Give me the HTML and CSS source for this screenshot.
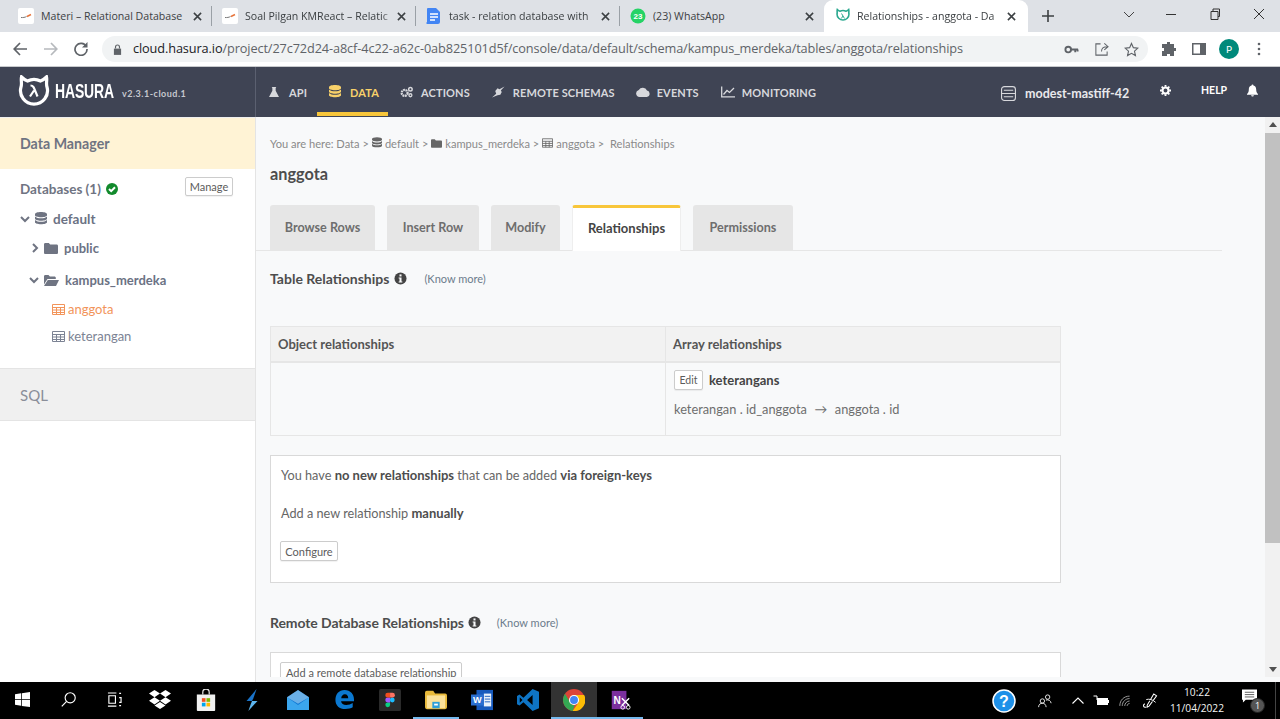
FILE: index.html
```html
<!DOCTYPE html>
<html lang="en">
<head>
<meta charset="utf-8">
<title>Relationships - anggota - Data | Hasura</title>
<link rel="stylesheet" href="styles.css">
</head>
<body>
<svg class="defs" width="0" height="0">
  <defs>
    <symbol id="db" viewBox="0 0 12 14"><path fill="currentColor" d="M6 0C2.700 0 0 .9 0 2.100v1.100C0 4.300 2.700 5.200 6 5.200s6-.9 6-2V2.100C12 .9 9.300 0 6 0zM0 4.500v2.200c0 1.100 2.700 2 6 2s6-.9 6-2V4.500C10.700 5.800 8.300 6.300 6 6.300S1.300 5.800 0 4.500zM0 8v2.200C0 11.300 2.700 12.200 6 12.200s6-.9 6-2V8c-1.300 1.300-3.700 1.800-6 1.800S1.300 9.300 0 8z"/></symbol>
    <symbol id="folder" viewBox="0 0 14 11"><path fill="currentColor" d="M1.300 0h3.500l1.400 1.600h6.500c.7 0 1.300.6 1.300 1.300v6.800c0 .7-.6 1.300-1.300 1.300H1.300C.6 11 0 10.400 0 9.700V1.300C0 .6.600 0 1.300 0z"/></symbol>
    <symbol id="table" viewBox="0 0 13 11"><path fill="none" stroke="currentColor" d="M.5.5h12v10H.5zM.5 3.500h12M.5 6h12M.5 8.500h12M4.500 3.500v7M8.500 3.500v7"/></symbol>
    <symbol id="info" viewBox="0 0 14 14"><circle cx="7" cy="7" r="6.500" fill="currentColor"/><rect x="5.900" y="2.600" width="2.200" height="2.200" fill="#f8f9fa"/><path fill="#f8f9fa" d="M5 6h3.100v4.200H9v1.100H5v-1.100h.9V7.100H5z"/></symbol>
    <symbol id="close" viewBox="0 0 10 10"><path stroke="currentColor" stroke-width="1.700" d="M1 1l8 8M9 1l-8 8"/></symbol>
    <symbol id="dash" viewBox="0 0 16 16"><rect width="16" height="16" rx="2" fill="#fff"/><path d="M3 9.500c2 .2 4-.1 5.500-1" stroke="#777" fill="none"/><path d="M9 8.500l4-2" stroke="#e8743b" stroke-width="1.500"/></symbol>
    <symbol id="chev-d" viewBox="0 0 10 7"><path fill="none" stroke="currentColor" stroke-width="2" d="M1 1l4 4 4-4"/></symbol>
    <symbol id="chev-r" viewBox="0 0 7 10"><path fill="none" stroke="currentColor" stroke-width="2" d="M1 1l4 4-4 4"/></symbol>
  </defs>
</svg>

<div class="screen">
  <div class="tabstrip">
    <div class="tab">
      <svg class="fav"><use href="#dash"/></svg>
      <span class="tab-title">Materi – Relational Database</span>
      <svg class="tab-x"><use href="#close"/></svg>
    </div>
    <i class="tab-sep"></i>
    <div class="tab">
      <svg class="fav"><use href="#dash"/></svg>
      <span class="tab-title tab-fade">Soal Pilgan KMReact – Relatic</span>
      <svg class="tab-x"><use href="#close"/></svg>
    </div>
    <i class="tab-sep"></i>
    <div class="tab">
      <svg class="fav" viewBox="0 0 16 16"><path fill="#4285f4" d="M2 0h8l4 4v10a2 2 0 0 1-2 2H2a1 1 0 0 1-1-2V1a1 1 0 0 1 1-1z"/><path stroke="#fff" stroke-width="1.500" d="M4 6h8M4 9h8M4 12h5"/></svg>
      <span class="tab-title tab-fade">task - relation database with</span>
      <svg class="tab-x"><use href="#close"/></svg>
    </div>
    <i class="tab-sep"></i>
    <div class="tab">
      <svg class="fav" viewBox="0 0 16 16"><circle cx="8" cy="8" r="7.500" fill="#25d366"/><text x="8" y="11" font-size="8" font-weight="700" text-anchor="middle" fill="#fff" font-family="Liberation Sans">23</text></svg>
      <span class="tab-title">(23) WhatsApp</span>
      <svg class="tab-x"><use href="#close"/></svg>
    </div>
    <div class="tab tab-active">
      <svg class="fav" viewBox="0 0 16 16"><path fill="none" stroke="#2aa88f" stroke-width="1.600" d="M2.300 1.500c-.5 2 .2 3-.3 4.500a6 6 0 1 0 12 0c-.5-1.500.2-2.500-.3-4.500-1 1-2 1.500-2.700 1.700a7 7 0 0 0-6 0C4.300 3 3.300 2.500 2.300 1.500z"/><path d="M6.500 5.500l3 5M8 8l-1.700 2.500" stroke="#2aa88f" fill="none"/></svg>
      <span class="tab-title tab-fade">Relationships - anggota - Da</span>
      <svg class="tab-x"><use href="#close"/></svg>
    </div>
    <svg class="newtab" viewBox="0 0 12 12"><path stroke="#3c4043" stroke-width="1.600" d="M6 0v12M0 6h12"/></svg>
    <div class="winctl">
      <svg viewBox="0 0 12 12"><path fill="none" stroke="#444" d="M1 4l5 5 5-5"/></svg>
      <svg viewBox="0 0 12 12"><path stroke="#333" d="M1 6.500h10"/></svg>
      <svg viewBox="0 0 12 12"><path fill="none" stroke="#333" d="M2 3.500h7v8H2zM4 3.500V1h6.500v7.500H9"/></svg>
      <svg viewBox="0 0 12 12"><path stroke="#333" d="M1 1l10 10M11 1L1 11"/></svg>
    </div>
  </div>

  <div class="toolbar">
    <svg class="tb-ic" viewBox="0 0 14 14"><path fill="none" stroke="#5f6368" stroke-width="1.700" d="M14 7H1.500M7 1L1.200 7 7 13"/></svg>
    <svg class="tb-ic" viewBox="0 0 14 14"><path fill="none" stroke="#b6b9bd" stroke-width="1.700" d="M0 7h12.500M7 1l5.800 6L7 13"/></svg>
    <svg class="tb-ic" viewBox="0 0 14 14"><path fill="none" stroke="#5f6368" stroke-width="1.700" d="M12.300 4.500A6 6 0 1 0 13 7"/><path fill="#5f6368" d="M13.500 0v5.500H8z"/></svg>
    <div class="omnibox">
      <svg class="lock" viewBox="0 0 10 12"><path fill="#5f6368" d="M1 5h8v7H1z"/><path fill="none" stroke="#5f6368" stroke-width="1.300" d="M2.800 5V3.200a2.200 2.200 0 0 1 4.400 0V5"/></svg>
      <span class="url"><b>cloud.hasura.io</b>/project/27c72d24-a8cf-4c22-a62c-0ab825101d5f/console/data/default/schema/kampus_merdeka/tables/anggota/relationships</span>
      <svg class="omni-ic" viewBox="0 0 16 16"><circle cx="4.500" cy="8" r="3" fill="none" stroke="#5f6368" stroke-width="2"/><path stroke="#5f6368" stroke-width="2" d="M7 8h8M12 8v3M14.500 8v2"/></svg>
      <svg class="omni-ic" viewBox="0 0 16 16"><path fill="none" stroke="#5f6368" stroke-width="1.100" d="M7 2H2v12h12v-4M8 10c0-3 2-5 6-5M11 1.500L15 5l-4 3.500"/></svg>
      <svg class="omni-ic" viewBox="0 0 16 16"><path fill="none" stroke="#5f6368" stroke-width="1.200" d="M8 1.500l2 4.500 4.800.5-3.600 3.200 1 4.800L8 12.100l-4.200 2.400 1-4.800L1.200 6.500 6 6z"/></svg>
    </div>
    <div class="tb-right">
      <svg class="ext" viewBox="0 0 14 14"><path fill="#5f6368" d="M5 0h3v2h4v4h2v3h-2v5H8v-2H5v2H0V9h2V6H0V2h5z"/></svg>
      <svg class="ext" viewBox="0 0 14 14"><path fill="#5f6368" d="M0 1h14v12H0zM1.500 2.500v9H8v-9z" fill-rule="evenodd"/></svg>
      <span class="avatar">P</span>
      <svg class="dots" viewBox="0 0 4 14"><circle cx="2" cy="2" r="1.300" fill="#5f6368"/><circle cx="2" cy="7" r="1.300" fill="#5f6368"/><circle cx="2" cy="12" r="1.300" fill="#5f6368"/></svg>
    </div>
  </div>

  <header class="hasura-nav">
    <div class="brand">
      <svg class="logo" viewBox="0 0 32 32"><path fill="none" stroke="#fff" stroke-width="3.200" d="M3.500 2c-.8 4 .7 6-.5 10a13.500 13.500 0 1 0 26 0c-1.200-4 .3-6-.5-10-2 2-4.500 3.500-6 4a14 14 0 0 0-13 0c-1.500-.5-4-2-6-4z"/><path fill="none" stroke="#fff" stroke-width="2.200" d="M12.500 10.500c3 0 3 1 7 11M16 15.500l-4 6"/></svg>
      <span class="brand-name">HASURA</span>
      <span class="brand-ver">v2.3.1-cloud.1</span>
    </div>
    <nav class="nav-items">
      <a class="nav-item nav-api"><svg viewBox="0 0 12 12"><path fill="#d7d8dc" d="M3.500 0h5v1H8v3.500L12 12H0l4-7.500V1h-.5z"/></svg>API</a>
      <a class="nav-item nav-data nav-active"><svg viewBox="0 0 12 14"><use href="#db"/></svg>DATA</a>
      <a class="nav-item nav-actions"><svg viewBox="0 0 14 12"><circle cx="5" cy="7" r="3.200" fill="none" stroke="#d7d8dc" stroke-width="2.400" stroke-dasharray="2 .6"/><circle cx="11.200" cy="3" r="1.900" fill="none" stroke="#d7d8dc" stroke-width="1.600"/><circle cx="11.200" cy="9.500" r="1.600" fill="none" stroke="#d7d8dc" stroke-width="1.400"/></svg>ACTIONS</a>
      <a class="nav-item nav-remote"><svg viewBox="0 0 14 12"><path fill="#d7d8dc" d="M13.500 0L8 3 6 2 3.500 5l1 3L0 12l6-2.500 3-.5 1.500-3-1-1.500z"/></svg>REMOTE SCHEMAS</a>
      <a class="nav-item nav-events"><svg viewBox="0 0 14 10"><path fill="#d7d8dc" d="M3.500 10a3.500 3.500 0 0 1-.7-6.900A4.500 4.500 0 0 1 11 3.500 3.300 3.300 0 0 1 10.800 10z"/></svg>EVENTS</a>
      <a class="nav-item nav-mon"><svg viewBox="0 0 14 11"><path fill="none" stroke="#d7d8dc" stroke-width="1.300" d="M.7 0v10.300H14M2.500 8l3.500-4 2.500 2L13 1.500"/></svg>MONITORING</a>
    </nav>
    <div class="nav-right">
      <svg class="srv" viewBox="0 0 16 16"><rect x=".6" y=".6" width="14.800" height="14.800" rx="3" fill="none" stroke="#d7d8dc" stroke-width="1.200"/><path stroke="#d7d8dc" stroke-width="1.200" d="M.6 8h14.800M3 4.500h10M3 11.500h10"/></svg>
      <span class="project">modest-mastiff-42</span>
      <svg class="gear" viewBox="0 0 12 12"><circle cx="6" cy="6" r="3.300" fill="none" stroke="#fff" stroke-width="2.300"/><path stroke="#fff" stroke-width="2" d="M6 0v2M6 10v2M0 6h2M10 6h2M1.800 1.800l1.400 1.400M8.800 8.800l1.400 1.400M1.800 10.200l1.400-1.400M8.800 3.200l1.400-1.400"/></svg>
      <span class="help">HELP</span>
      <svg class="bell" viewBox="0 0 12 13"><path fill="#fff" d="M6 0a1 1 0 0 1 1 1.100C9 1.600 10 3.200 10 5c0 3 .8 4 2 5.200V11H0v-.8C1.200 9 2 8 2 5c0-1.800 1-3.400 3-3.900A1 1 0 0 1 6 0zM4.500 11.600h3a1.500 1.500 0 0 1-3 0z"/></svg>
    </div>
  </header>

  <div class="app">
    <aside class="sidebar">
      <div class="side-head">Data Manager</div>
      <div class="side-body">
        <div class="db-row">
          <span class="db-title">Databases (1)</span>
          <svg class="ok" viewBox="0 0 12 12"><circle cx="6" cy="6" r="6" fill="#128a2c"/><path fill="none" stroke="#fff" stroke-width="2" d="M3 6l2.200 2.200L9 4.300"/></svg>
          <button class="btn btn-manage">Manage</button>
        </div>
        <div class="tree-db"><svg class="cv"><use href="#chev-d"/></svg><svg class="ic-db"><use href="#db"/></svg>default</div>
        <div class="tree-schema"><svg class="cvr"><use href="#chev-r"/></svg><svg class="ic-folder"><use href="#folder"/></svg>public</div>
        <div class="tree-schema tree-open"><svg class="cv"><use href="#chev-d"/></svg><svg class="ic-folder" viewBox="0 0 15 11"><path fill="currentColor" d="M0 9.500V1.300C0 .6.600 0 1.300 0h3.200l1.400 1.500h4.600c.7 0 1.300.6 1.300 1.300V4H3.500zM3.800 5H15l-3 6H0z"/></svg>kampus_merdeka</div>
        <div class="tree-table is-current"><svg class="ic-table"><use href="#table"/></svg>anggota</div>
        <div class="tree-table"><svg class="ic-table"><use href="#table"/></svg>keterangan</div>
      </div>
      <div class="side-sql">SQL</div>
    </aside>

    <main class="content">
      <div class="crumbs">You are here: Data &gt;<svg class="cr-db"><use href="#db"/></svg>default &gt;<svg class="cr-f"><use href="#folder"/></svg>kampus_merdeka &gt;<svg class="cr-t"><use href="#table"/></svg>anggota &gt; &nbsp;Relationships</div>
      <h1 class="title">anggota</h1>
      <div class="tabs">
        <a class="ctab ctab-1">Browse Rows</a>
        <a class="ctab ctab-2">Insert Row</a>
        <a class="ctab ctab-3">Modify</a>
        <a class="ctab ctab-4 ctab-active">Relationships</a>
        <a class="ctab ctab-5">Permissions</a>
      </div>
      <h2 class="section-h sec-table">Table Relationships <svg class="info"><use href="#info"/></svg><a class="know">(Know more)</a></h2>
      <table class="rel-table">
        <thead>
          <tr><th class="col-obj">Object relationships</th><th>Array relationships</th></tr>
        </thead>
        <tbody>
          <tr>
            <td></td>
            <td>
              <div class="rel-name"><button class="btn btn-edit">Edit</button><b>keterangans</b></div>
              <div class="rel-map">keterangan . id_anggota<span class="rel-arrow">→</span>anggota . id</div>
            </td>
          </tr>
        </tbody>
      </table>
      <section class="box box-add">
        <p class="p-1">You have <b>no new relationships</b> that can be added <b>via foreign-keys</b></p>
        <p class="p-2">Add a new relationship <b>manually</b></p>
        <button class="btn btn-conf">Configure</button>
      </section>
      <h2 class="section-h sec-remote">Remote Database Relationships <svg class="info"><use href="#info"/></svg><a class="know">(Know more)</a></h2>
      <section class="box box-remote">
        <button class="btn btn-conf">Add a remote database relationship</button>
      </section>
    </main>

    <div class="scrollbar">
      <svg viewBox="0 0 8 5" class="arrow"><path fill="#505050" d="M4 0l4 5H0z"/></svg>
      <div class="thumb"></div>
      <svg viewBox="0 0 8 5" class="arrow arrow-d"><path fill="#505050" d="M4 5l4-5H0z"/></svg>
    </div>
  </div>

  <footer class="taskbar">
    <div class="task-left">
      <span class="ti ti-sm"><svg viewBox="0 0 16 16"><path fill="#fff" d="M0 2.300l6.500-.9v6.200H0zM7.300 1.300L16 0v7.600H7.300zM0 8.400h6.500v6.200L0 13.700zM7.300 8.400H16V16l-8.700-1.200z"/></svg></span>
      <span class="ti ti-sm"><svg viewBox="0 0 16 16"><circle cx="9.800" cy="6.200" r="5.400" fill="none" stroke="#fff" stroke-width="1.200"/><path stroke="#fff" stroke-width="1.300" d="M6 10L.8 15.300"/></svg></span>
      <span class="ti ti-sm"><svg viewBox="0 0 16 16"><path fill="none" stroke="#fff" stroke-width="1.200" d="M1 1h9M1 15h9M2 4h7v8H2zM13 1.500h2M13 6h2v5h-2M13 14.500h2"/></svg></span>
      <span class="ti"><svg viewBox="0 0 22 20"><path fill="#fff" d="M5.500 0L0 3.600l5.500 3.600L11 3.600zM16.500 0L11 3.600l5.500 3.600L22 3.600zM0 10.800l5.500 3.600L11 10.800 5.500 7.200zM16.500 7.200L11 10.800l5.500 3.600 5.500-3.600zM5.500 15.500L11 19.100l5.500-3.600L11 12z"/></svg></span>
      <span class="ti"><svg viewBox="0 0 20 24"><path fill="none" stroke="#ddd" stroke-width="1.400" d="M6.500 6V3.500a3.500 3.500 0 0 1 7 0V6"/><path fill="#f1f1f1" d="M0 6h20v17a1 1 0 0 1-1 1H1a1 1 0 0 1-1-1z"/><path fill="#f25022" d="M5.500 10h4v4h-4z"/><path fill="#7fba00" d="M10.500 10h4v4h-4z"/><path fill="#00a4ef" d="M5.500 15h4v4h-4z"/><path fill="#ffb900" d="M10.500 15h4v4h-4z"/></svg></span>
      <span class="ti"><svg viewBox="0 0 14 24"><path fill="#1a73c8" d="M12 0L1 13h6l1.500-3z"/><path fill="#5db5ee" d="M7 13h6L3 24l2.500-7z"/></svg></span>
      <span class="ti"><svg viewBox="0 0 24 22"><path fill="#0f78d4" d="M0 8L12 0l12 8v14H0z"/><path fill="#3ba6ee" d="M0 8l12 8.500L24 8v14H0z"/><path fill="#c6e5fa" d="M0 8l12 7 12-7-12-8z" opacity=".5"/></svg></span>
      <span class="ti ti-edge"><svg viewBox="0 0 22 24"><path fill="#0b78d0" d="M11 1C4.500 1 .5 6 .5 12.500S5 23 12 23c3.600 0 6.500-.8 8.500-2v-5c-2 1.300-4.700 2.300-7.500 2.300-3.300 0-5.700-1.500-6-4.300h15V12C22 6 18 1 11 1zm-3.800 9.500C7.500 8 9 6 11.500 6s3.800 2 3.800 4.500z"/></svg></span>
      <span class="ti"><svg viewBox="0 0 24 24"><rect width="24" height="24" rx="2" fill="#2a2a2a"/><circle cx="14.500" cy="12" r="2.600" fill="#1abcfe"/><path fill="#0acf83" d="M9.500 14.700h2.600v2.600a2.600 2.600 0 1 1-2.600-2.600z"/><path fill="#a259ff" d="M9.500 9.400h2.600v5.300H9.500a2.600 2.600 0 0 1 0-5.300z"/><path fill="#f24e1e" d="M9.500 4.100h2.600v5.300H9.500a2.600 2.600 0 0 1 0-5.300z"/><path fill="#ff7262" d="M12.100 4.100h2.600a2.600 2.600 0 0 1 0 5.300h-2.600z"/></svg></span>
      <span class="ti ti-run"><svg viewBox="0 0 24 20"><path fill="#e8b93a" d="M0 2a2 2 0 0 1 2-2h7l2 3h11a2 2 0 0 1 2 2v13a2 2 0 0 1-2 2H2a2 2 0 0 1-2-2z"/><path fill="#fbe199" d="M2 5h20v14H2z"/><path fill="#2e9fd9" d="M8 12h8v7H8z"/><path fill="#fff" d="M10 14h4v2h-4z"/></svg></span>
      <span class="ti"><svg viewBox="0 0 24 22"><path fill="#185abd" d="M6 0h18v22H6z"/><path fill="#eaf1fb" d="M14 4h8v14h-8z"/><path stroke="#185abd" d="M15 7h6M15 10h6M15 13h6"/><path fill="#2b6fd1" d="M0 5h14v12H0z"/><text x="7" y="14.500" font-size="10" font-weight="700" text-anchor="middle" fill="#fff" font-family="Liberation Sans">W</text></svg></span>
      <span class="ti"><svg viewBox="0 0 24 24"><path fill="#0e74c4" d="M17 0l7 3v18l-7 3L7 14.500 2.800 18 0 16.500V7.500L2.800 6 7 9.500zM3 9v6l3-3zM17 6.500L11 12l6 5.500z"/></svg></span>
      <span class="ti ti-active"><svg viewBox="0 0 24 24"><circle cx="12" cy="12" r="12" fill="#db4437"/><path fill="#fbbc05" d="M12 6.500h11A12 12 0 0 1 10.500 23.900L16.800 15z"/><path fill="#34a853" d="M2.200 5.100L8 15c1 1.800 2.600 2.700 4.800 2.500l-2.300 6.400A12 12 0 0 1 2.200 5.100z"/><circle cx="12" cy="12" r="5.500" fill="#fff"/><circle cx="12" cy="12" r="4.300" fill="#4285f4"/></svg></span>
      <span class="ti ti-run"><svg viewBox="0 0 24 24"><path fill="#7b2f9e" d="M3 2h16v20H3z"/><text x="9" y="16" font-size="11" font-weight="700" text-anchor="middle" fill="#fff" font-family="Liberation Sans">N</text><path fill="none" stroke="#fff" stroke-width="1.600" d="M14 10l8 8M22 10l-8 8"/><circle cx="15" cy="20" r="2" fill="none" stroke="#fff"/><circle cx="21" cy="20" r="2" fill="none" stroke="#fff"/></svg></span>
    </div>
    <div class="task-right">
      <svg class="tr-help" viewBox="0 0 24 24"><circle cx="12" cy="12" r="11" fill="#1e90e8" stroke="#fff" stroke-width="1.500"/><text x="12" y="18" font-size="16" font-weight="700" text-anchor="middle" fill="#fff" font-family="Liberation Sans">?</text></svg>
      <svg class="tr-people" viewBox="0 0 16 16"><circle cx="5" cy="8" r="2.500" fill="none" stroke="#fff"/><path fill="none" stroke="#fff" d="M.7 15c0-3 2-4.500 4.300-4.500S9 12 9.300 15"/><circle cx="11" cy="3.500" r="2.500" fill="none" stroke="#fff"/><path fill="none" stroke="#fff" d="M9 7c3-1 5.500.5 6 3.500"/></svg>
      <svg class="tr-caret" viewBox="0 0 12 7"><path fill="none" stroke="#fff" stroke-width="1.100" d="M.5 6.500l5.500-5.500 5.500 5.500"/></svg>
      <svg class="tr-bat" viewBox="0 0 16 12"><path fill="none" stroke="#fff" d="M.5 1h3.500v4"/><path fill="#fff" d="M4 3h11v7H4zM15 5h1v3h-1z"/></svg>
      <svg class="tr-wifi" viewBox="0 0 16 14"><path fill="none" stroke="#aaa" stroke-width="1.100" d="M1 13C1 6 6 1 13 1M4 13c0-5 4-9 9-9M7 13c0-3 3-6 6-6M10 13c0-1.500 1.500-3 3-3"/></svg>
      <svg class="tr-pen" viewBox="0 0 16 16"><path fill="none" stroke="#fff" stroke-width="1.100" d="M4 15C1 16 0 13 2.500 11.500M5 13l7-12 3 2-8 11-2 1z"/><path stroke="#fff" d="M4 7c3-1 7 0 10 3"/></svg>
      <div class="clock"><span>10:22</span><span>11/04/2022</span></div>
      <span class="notif"><svg viewBox="0 0 16 14"><path fill="#fff" d="M0 0h16v11H4l-3 3v-3H0z"/><path stroke="#555" d="M3 3h10M3 5.500h10M3 8h10"/></svg><b class="notif-count">1</b></span>
      <i class="show-desk"></i>
    </div>
  </footer>
</div>
</body>
</html>
```

FILE: styles.css
```css
* { box-sizing: border-box; }
html, body { margin: 0; padding: 0; height: 100%; overflow: hidden; background: #fff; }
.defs { position: absolute; }
svg { display: block; flex: none; }
.screen { width: 1280px; height: 719px; display: flex; flex-direction: column; overflow: hidden; font-family: Lato, "Open Sans", sans-serif; color: #4d4d4d; }

/* chrome tab strip */
.tabstrip { height: 32px; flex: none; background: #dee1e6; display: flex; align-items: center; padding-left: 8px; font-family: "Open Sans", sans-serif; }
.tab { width: 203px; height: 32px; display: flex; align-items: center; padding: 0 6px 0 10px; flex: none; }
.fav { width: 16px; height: 16px; margin-right: 7px; }
.tab-title { flex: 1; font-size: 10.6px; white-space: nowrap; overflow: hidden; color: #3c4043; }
.tab-fade { -webkit-mask-image: linear-gradient(90deg, #000 92%, transparent); mask-image: linear-gradient(90deg, #000 92%, transparent); }
.tab-x { width: 9px; height: 9px; margin-left: 3px; margin-right: 3px; color: #3c4043; }
.tab-sep { width: 1px; height: 20px; background: #9aa0a6; flex: none; }
.tab-active { background: #fff; border-radius: 9px 9px 0 0; width: 204px; margin-left: 1px; padding-left: 11px; padding-right: 9px; }
.tab-active .fav { margin-right: 6px; }
.newtab { width: 12px; height: 12px; margin-left: 14px; }
.winctl { margin-left: auto; display: flex; align-items: center; gap: 32px; padding-right: 15px; margin-top: -5px; }
.winctl svg { width: 12px; height: 12px; }
.winctl svg:first-child { margin-right: -2px; }

/* toolbar */
.toolbar { height: 34px; flex: none; background: #fff; display: flex; align-items: center; padding: 0 0 0 13px; border-bottom: 1px solid #c8cacd; box-sizing: content-box; }
.tb-ic { width: 14px; height: 14px; margin-right: 16.500px; }
.omnibox { margin-left: -2.500px; width: 1046px; height: 26px; border-radius: 13px; background: #f1f3f4; display: flex; align-items: center; padding: 0 9px 0 11px; }
.lock { width: 9px; height: 11px; margin-right: 11px; }
.url { flex: 1; font-size: 12.730px; color: #5f6368; white-space: nowrap; font-family: "Open Sans", sans-serif; letter-spacing: -.11px; margin-top: -2px; }
.url b { font-weight: 400; color: #202124; }
.omni-ic { width: 15px; height: 15px; margin-left: 15px; }
.tb-right { display: flex; align-items: center; margin-left: 14px; }
.ext { width: 14px; height: 14px; margin-right: 16px; }
.avatar { width: 20px; height: 20px; border-radius: 50%; background: #00897b; color: #fff; font-size: 10px; display: flex; align-items: center; justify-content: center; margin-left: -3px; }
.dots { width: 4px; height: 14px; margin-left: 18px; }

/* hasura nav */
.hasura-nav { height: 50px; flex: none; background: #3f4454; display: flex; align-items: stretch; color: #fff; }
.brand { width: 256px; flex: none; display: flex; align-items: center; padding-left: 18px; border-right: 1px solid #5b6070; }
.logo { width: 32px; height: 32px; margin-top: -3px; }
.brand-name { font-size: 21px; font-weight: 700; margin-left: 5px; letter-spacing: -.2px; font-family: "Liberation Sans", sans-serif; transform: scaleX(.665); transform-origin: left center; width: 58px; margin-top: -3px; }
.brand-ver { font-size: 9px; color: #c7c9cf; margin-left: 9px; letter-spacing: .5px; margin-top: 3px; font-weight: 700; }
.nav-items { display: flex; align-items: flex-start; padding-left: 1px; }
.nav-item { height: 49px; display: flex; align-items: center; font-size: 11px; font-weight: 700; letter-spacing: .12px; color: #d7d8dc; padding: 5px 0 0 12px; border-bottom: 4px solid transparent; white-space: nowrap; }
.nav-item svg { width: 10px; height: 12px; margin-right: 10px; }
.nav-api { padding-right: 10px; }
.nav-data { padding-right: 9px; color: #f8d16a; }
.nav-data svg { color: #f8d16a; width: 12px; height: 14px; margin-right: 9px; }
.nav-actions { padding-right: 10px; }
.nav-actions svg { width: 13px; margin-right: 8px; }
.nav-remote { padding-right: 9px; }
.nav-remote svg { width: 13px; margin-right: 8px; }
.nav-events svg { width: 14px; margin-right: 7px; }
.nav-events { padding-right: 10px; }
.nav-mon svg { width: 14px; margin-right: 7px; }
.nav-active { border-bottom-color: #f8c63a; }
.nav-right { margin-left: auto; display: flex; align-items: center; padding-right: 22px; }
.srv { width: 15px; height: 15px; margin-right: 9px; margin-top: 2px; }
.project { font-size: 12.500px; font-weight: 700; color: #e9e9ec; width: 135px; margin-top: 2px; }
.gear { width: 11px; height: 11px; margin-top: -4px; }
.help { font-size: 10.500px; font-weight: 700; margin: -4px 21px 0 30px; width: 25px; }
.bell { width: 11px; height: 13px; margin-top: -3px; }

/* app */
.app { flex: 1; min-height: 0; display: flex; background: #f8f9fa; }
.sidebar { width: 256px; flex: none; background: #fff; border-right: 1px solid #e4e4e4; display: flex; flex-direction: column; color: #6b7284; }
.side-head { height: 52px; flex: none; background: #fff3d5; display: flex; align-items: center; padding-left: 20px; font-size: 14.200px; font-weight: 700; color: #6f7482; border-top: 1px solid #eee; }
.side-body { height: 200px; flex: none; border-bottom: 1px solid #e4e4e4; padding-left: 20px; }
.db-row { height: 38px; display: flex; align-items: center; font-size: 13.500px; font-weight: 700; padding-top: 2px; }
.db-title { color: #6f7482; }
.ok { width: 12px; height: 12px; margin-left: 5px; }
.btn { background: #fff; border: 1px solid #ccc; border-radius: 2px; font-family: Lato, sans-serif; font-size: 11px; color: #5c5c5c; padding: 0; box-shadow: 0 1px 1px rgba(0,0,0,.06); white-space: nowrap; }
.btn-manage { margin-left: auto; margin-right: 22px; width: 48px; height: 19px; margin-top: -5px; }
.tree-db { display: flex; align-items: center; height: 20px; font-size: 13.500px; font-weight: 700; margin-top: 2px; }
.cv { width: 10px; height: 7px; color: #6f7482; }
.cvr { width: 7px; height: 10px; color: #6f7482; margin: 0 2px 0 2px; }
.ic-db { width: 12px; height: 14px; margin: 0 6px 0 5px; color: #6f7482; }
.tree-schema { display: flex; align-items: center; height: 20px; padding-left: 10px; margin-top: 9px; font-size: 13px; font-weight: 700; }
.ic-folder { width: 14px; height: 11px; margin: 0 6px 0 3px; color: #6f7482; }
.tree-open { margin-top: 12px; padding-left: 9px; }
.tree-open .ic-folder { width: 15px; margin: 0 6px 0 5px; }
.tree-table { display: flex; align-items: center; height: 20px; margin-top: 7px; padding-left: 32px; font-size: 13px; color: #7c8394; }
.tree-open + .tree-table { margin-top: 9px; }
.ic-table { width: 13px; height: 11px; margin-right: 3px; }
.is-current { color: #f2945a; }
.side-sql { height: 52px; flex: none; background: #f0f0f0; display: flex; align-items: center; padding-left: 20px; font-size: 15px; color: #8a8e99; border-bottom: 1px solid #e4e4e4; }

.content { flex: 1; min-width: 0; padding: 18px 0 0 14px; overflow: hidden; margin-bottom: 5px; }
.crumbs { display: flex; align-items: center; gap: 3px; height: 16px; font-size: 11.100px; color: #8a8a8a; white-space: nowrap; }
.cr-db { width: 10px; height: 12px; color: #666; }
.cr-f { width: 11px; height: 9px; color: #666; }
.cr-t { width: 11px; height: 10px; color: #666; }
.title { margin: 11px 0 0; font-size: 16.300px; font-weight: 700; color: #4d4d4d; height: 22px; line-height: 23px; }
.tabs { margin: 21px 0 0 -14px; padding-left: 14px; height: 46px; display: flex; border-bottom: 1px solid #e6e6e6; width: 966px; }
.ctab { height: 45px; background: #e6e6e6; display: flex; align-items: center; justify-content: center; font-size: 12.600px; font-weight: 700; color: #6e6e6e; border-radius: 3px 3px 0 0; margin-right: 12px; }
.ctab-1 { width: 105px; } .ctab-2 { width: 92px; } .ctab-3 { width: 69px; } .ctab-4 { width: 109px; } .ctab-5 { width: 100px; }
.ctab-active { height: 46px; background: #fff; color: #444; border: 1px solid #eee; border-top: 3px solid #f8c63a; border-bottom: 0; padding-bottom: 4px; font-size: 13px; }
.section-h { display: flex; align-items: center; margin: 0; font-size: 14px; font-weight: 700; color: #4d4d4d; height: 20px; }
.sec-table { margin-top: 17px; }
.info { width: 13px; height: 13px; margin-left: 5px; color: #444; }
.know { font-size: 11px; font-weight: 400; color: #6c7c8c; margin-left: 17px; letter-spacing: 0; }
.rel-table { width: 791px; margin-top: 38px; border-collapse: collapse; font-size: 13px; }
.rel-table th { background: #f2f2f2; height: 35px; text-align: left; padding: 0 7px; border: 1px solid #e6e6e6; border-bottom-width: 2px; font-weight: 700; color: #555; font-size: 13px; }
.rel-table td { height: 74px; padding: 0 8px; border: 1px solid #e6e6e6; vertical-align: top; }
.col-obj { width: 395px; }
.rel-name { display: flex; align-items: center; margin-top: 7px; }
.rel-name b { color: #444; font-size: 13px; }
.btn-edit { width: 29px; height: 20px; margin-right: 6px; font-size: 10.500px; }
.rel-map { margin-top: 11px; color: #6e6e6e; font-size: 12.800px; }
.rel-arrow { display: inline-block; width: 28px; text-align: center; }
.box { width: 791px; background: #fff; border: 1px solid #d9d9d9; padding: 0 9px; }
.box-add { height: 128px; margin-top: 19px; font-size: 12.700px; color: #666; }
.box-add p { margin: 0; height: 16px; line-height: 16px; padding-left: 1px; }
.box-add b { color: #4d4d4d; font-size: 13px; }
.box-add .p-1 { margin-top: 11px; }
.box-add .p-2 { margin-top: 22px; }
.btn-conf { display: block; height: 20px; padding: 0 5px; font-size: 11px; }
.box-add .btn-conf { margin-top: 20px; width: 58px; padding: 0; }
.sec-remote { margin-top: 29px; letter-spacing: -.09px; }
.sec-remote .info { margin-left: 4px; }
.sec-remote .know { margin-left: 16px; }
.box-remote { margin-top: 20px; height: 60px; padding-top: 9px; }
.box-remote .btn-conf { width: 182px; }
.scrollbar { width: 15px; flex: none; background: #f1f1f1; display: flex; flex-direction: column; align-items: center; margin-bottom: 5px; }
.arrow { width: 8px; height: 5px; margin-top: 5px; }
.arrow-d { margin-top: auto; margin-bottom: 5px; }
.thumb { width: 15px; height: 410px; background: #c1c1c1; margin-top: 6px; }

/* taskbar */
.taskbar { height: 37px; flex: none; background: #000; display: flex; align-items: stretch; color: #fff; font-family: "Open Sans", sans-serif; }
.task-left { display: flex; align-items: stretch; margin-left: -1px; }
.ti { width: 46px; display: flex; align-items: center; justify-content: center; border-bottom: 2px solid transparent; }
.ti svg { width: 22px; height: 22px; }
.ti-sm svg { width: 15px; height: 15px; }
.ti-edge svg { width: 19px; height: 21px; }
.ti-run { border-bottom-color: #76b9ed; }
.ti-active { background: #333; border-bottom-color: #76b9ed; }
.task-right { margin-left: auto; display: flex; align-items: center; }
.tr-help { width: 24px; height: 24px; margin-right: 22px; }
.tr-people { width: 14px; height: 14px; margin-right: 20px; }
.tr-caret { width: 12px; height: 7px; margin-right: 9px; }
.tr-bat { width: 16px; height: 12px; margin-right: 9.500px; }
.tr-wifi { width: 13px; height: 12px; margin-right: 10.500px; }
.tr-pen { width: 16px; height: 15px; margin-right: 8px; }
.clock { width: 62px; display: flex; flex-direction: column; align-items: center; font-size: 10.200px; line-height: 16.500px; color: #f4f4f4; margin-top: -1px; }
.notif { position: relative; width: 23px; height: 25px; margin-left: 14px; margin-right: 10px; }
.notif svg { width: 15px; height: 14px; margin-top: 1px; }
.notif-count { position: absolute; right: 0; bottom: 0; width: 15px; height: 15px; border-radius: 50%; background: #555; border: 1px solid #222; font-size: 9px; font-weight: 400; display: flex; align-items: center; justify-content: center; }
.show-desk { display: block; width: 1px; height: 100%; background: #444; margin-right: 4px; }
```
